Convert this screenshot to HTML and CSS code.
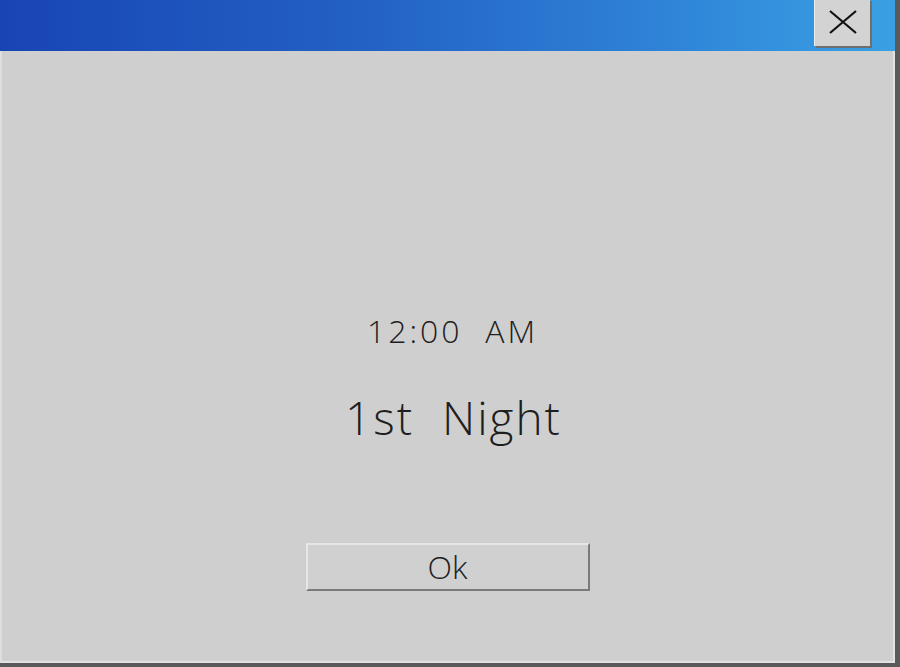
FILE: index.html
```html
<!DOCTYPE html>
<html lang="en">
<head>
  <meta charset="UTF-8">
  <title>1st Night</title>
  <link rel="stylesheet" href="styles.css">
</head>
<body>
  <div class="window">
    <div class="titlebar">
      <button class="close-btn" aria-label="Close">
        <svg width="30" height="24" viewBox="0 0 30 24">
          <path d="M2 1 L28 23 M28 1 L2 23" stroke="#111" stroke-width="2.2" fill="none"/>
        </svg>
      </button>
    </div>

    <div class="content">
      <p class="time">12:00&nbsp; AM</p>
      <p class="night">1st&nbsp; Night</p>
      <button class="ok-btn">Ok</button>
    </div>
  </div>
</body>
</html>
```

FILE: styles.css
```css
/* General Styles */
* {
  margin: 0;
  padding: 0;
  box-sizing: border-box;
}

body {
  background: #5a5a5a;
  font-family: 'Open Sans', 'Liberation Sans', sans-serif;
  color: #1e1e1e;
  overflow: hidden;
}

.window {
  width: 895px;
  height: 663px;
  background: #cfcfcf;
  box-shadow: inset 2px 0 0 #dedede, inset -2px -2px 0 #e2e2e2;
  display: flex;
  flex-direction: column;
}

/* Title bar */
.titlebar {
  height: 51px;
  background: linear-gradient(90deg, #1845b4 0%, #2361c4 40%, #2f84d8 75%, #3aa0e3 100%);
  display: flex;
  justify-content: flex-end;
  align-items: flex-start;
  padding-right: 25px;
}

.close-btn {
  width: 56px;
  height: 47px;
  margin-top: -1px;
  background: #d3d3d3;
  border: none;
  border-left: 1px solid #ececec;
  box-shadow: 2px 2px 0 #6f6f6f;
  display: flex;
  justify-content: center;
  align-items: center;
  padding-bottom: 2px;
}

/* Content */
.content {
  flex: 1;
  display: flex;
  flex-direction: column;
  align-items: center;
  padding-top: 260px;
}

.time {
  font-size: 32px;
  line-height: 40px;
  font-weight: 300;
  letter-spacing: 3px;
  padding-left: 10px;
}

.night {
  margin-top: 38px;
  font-size: 46px;
  line-height: 56px;
  font-weight: 300;
  letter-spacing: 2px;
  padding-left: 12px;
}

.ok-btn {
  margin-top: 98px;
  width: 284px;
  height: 48px;
  background: #d0d0d0;
  border: 2px solid;
  border-color: #e6e6e6 #7a7a7a #7a7a7a #e6e6e6;
  font-family: inherit;
  font-size: 32px;
  font-weight: 300;
  color: #1e1e1e;
  line-height: 1;
}
```
